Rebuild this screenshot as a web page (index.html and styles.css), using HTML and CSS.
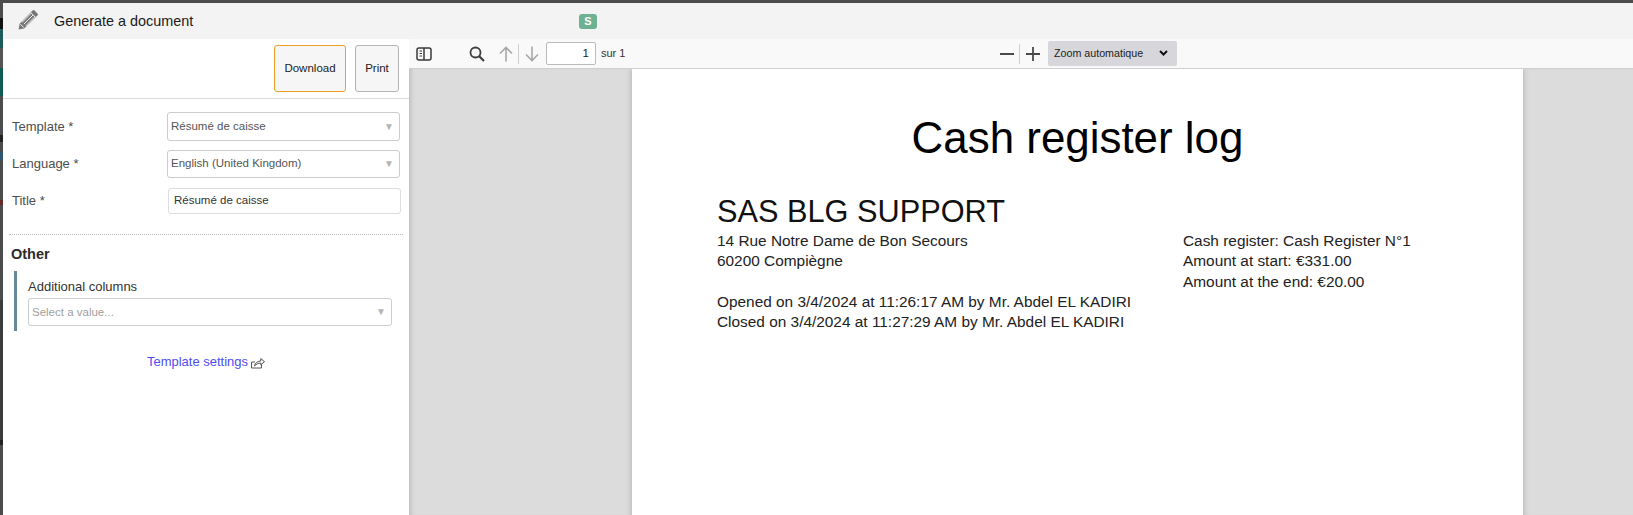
FILE: index.html
```html
<!DOCTYPE html>
<html lang="en">
<head>
<meta charset="utf-8">
<title>Generate a document</title>
<link rel="stylesheet" href="styles.css">
</head>
<body>
<div class="dialog">
  <header class="head">
    <svg class="pencil" width="20" height="20" viewBox="0 0 20 20"><path fill="#777" d="M14.600.6a1.400 1.400 0 0 1 2 0l2.800 2.800a1.400 1.400 0 0 1 0 2L6.200 18.400.6 19.400l1-5.600z"/><path fill="none" stroke="#f3f3f3" stroke-width="1" d="M13 2.800l4.200 4.200M4.200 12.200 13.400 3M7.800 15.800 17 6.600M2.400 14.200l3.400 3.400M5.900 14.100l9-9"/></svg>
    <span class="head-title">Generate a document</span>
    <span class="badge">S</span>
  </header>
  <div class="main">
    <aside class="panel">
      <div class="actions">
        <button class="btn btn-primary">Download</button>
        <button class="btn">Print</button>
      </div>
      <div class="form">
        <div class="row row-1">
          <span class="label">Template *</span>
          <div class="select"><span>Résumé de caisse</span><i class="arrow">▼</i></div>
        </div>
        <div class="row row-2">
          <span class="label">Language *</span>
          <div class="select"><span>English (United Kingdom)</span><i class="arrow">▼</i></div>
        </div>
        <div class="row row-3">
          <span class="label">Title *</span>
          <input class="text-input" value="Résumé de caisse">
        </div>
      </div>
      <div class="dotted"></div>
      <h3 class="section">Other</h3>
      <div class="group">
        <div class="group-label">Additional columns</div>
        <div class="select select-wide"><span class="placeholder">Select a value...</span><i class="arrow">▼</i></div>
      </div>
      <div class="link-row">
        <a class="link">Template settings</a>
        <svg class="link-icon" width="14" height="12" viewBox="0 0 14 12"><path fill="none" stroke="#555" stroke-width="1" d="M10.500 7.500v3.500H.5V5h3.500M3.500 9c.6-3 2.800-4.900 6.300-5V1.500L13.500 4.700 9.800 7.800V6C7.300 6 5.200 7.100 3.500 9z"/></svg>
      </div>
    </aside>
    <section class="viewer">
      <div class="toolbar">
        <svg class="tool tool-side" width="16" height="14" viewBox="0 0 16 14"><rect x="1" y="1" width="14" height="12" rx="2" fill="none" stroke="#3a3a3a" stroke-width="1.500"/><path fill="none" stroke="#3a3a3a" stroke-width="1.500" d="M8 1v12"/><path fill="none" stroke="#3a3a3a" d="M3.500 4H6M3.500 6.500H6M3.500 9H6"/></svg>
        <svg class="tool tool-search" width="16" height="16" viewBox="0 0 16 16"><circle cx="6.500" cy="6.500" r="5" fill="none" stroke="#3f3f3f" stroke-width="1.800"/><path stroke="#3f3f3f" stroke-width="2.200" d="M10.200 10.200 15 15"/></svg>
        <svg class="tool tool-up" width="14" height="16" viewBox="0 0 14 16"><path fill="none" stroke="#a8a8a8" stroke-width="1.600" d="M7 15.500V1.500M1 7.500l6-6 6 6"/></svg>
        <span class="sep sep-a"></span>
        <svg class="tool tool-down" width="14" height="16" viewBox="0 0 14 16"><path fill="none" stroke="#a8a8a8" stroke-width="1.600" d="M7 .5v14M1 8.500l6 6 6-6"/></svg>
        <input class="page-input" value="1">
        <span class="page-of">sur 1</span>
        <svg class="tool tool-minus" width="14" height="14" viewBox="0 0 14 14"><path stroke="#4a4a4a" stroke-width="2" d="M0 7h14"/></svg>
        <span class="sep sep-b"></span>
        <svg class="tool tool-plus" width="14" height="14" viewBox="0 0 14 14"><path stroke="#4a4a4a" stroke-width="1.800" d="M0 7h14M7 0v14"/></svg>
        <div class="zoom-select">
          <span>Zoom automatique</span>
          <svg width="9" height="6" viewBox="0 0 9 6"><path fill="none" stroke="#111" stroke-width="2" d="M1 1l3.500 3.500L8 1"/></svg>
        </div>
      </div>
      <div class="stage">
        <article class="page">
          <h1 class="doc-title">Cash register log</h1>
          <h2 class="doc-company">SAS BLG SUPPORT</h2>
          <div class="doc-cols">
            <div class="doc-left">
              <p>14 Rue Notre Dame de Bon Secours</p>
              <p>60200 Compiègne</p>
              <p class="gap">Opened on 3/4/2024 at 11:26:17 AM by Mr. Abdel EL KADIRI</p>
              <p>Closed on 3/4/2024 at 11:27:29 AM by Mr. Abdel EL KADIRI</p>
            </div>
            <div class="doc-right">
              <p>Cash register: Cash Register N°1</p>
              <p>Amount at start: €331.00</p>
              <p class="loose">Amount at the end: €20.00</p>
            </div>
          </div>
        </article>
      </div>
    </section>
  </div>
</div>
</body>
</html>
```
FILE: styles.css
```css
* { box-sizing: border-box; }
html, body { height: 100%; }
body {
  margin: 0;
  overflow: hidden;
  padding: 3px 0 0 3px;
  font-family: "Liberation Sans", Arial, sans-serif;
  background:
    linear-gradient(to bottom,
      #4c4c4c 0 18px, #111 18px 29px, #1f5b58 29px 48px, #555 48px 68px,
      #0f5a52 68px 96px, #4c4c4c 96px 135px, #222 135px 142px, #4c4c4c 142px 152px,
      #33566e 152px 160px, #4c4c4c 160px 200px, #6b2a2a 200px 205px, #4c4c4c 205px 300px,
      #3c3c3c 300px 440px, #222 440px 445px, #4c4c4c 445px 515px) 0 0 / 3px 100% no-repeat,
    #4c4c4c;
}
.dialog { height: 512px; display: flex; flex-direction: column; background: #fff; }

.head {
  height: 36px;
  flex: none;
  display: flex;
  align-items: center;
  background: #f3f3f3;
  padding-left: 15px;
}
.pencil { flex: none; margin-top: -3px; }
.head-title { margin-left: 16px; width: 525px; font-size: 14.400px; color: #1a1a1a; }
.badge {
  width: 18px;
  height: 15px;
  border-radius: 3px;
  background: #6fb193;
  color: #fff;
  font-size: 11px;
  font-weight: bold;
  text-align: center;
  line-height: 15px;
}

.main { flex: 1; display: flex; min-height: 0; }

.panel { width: 406px; flex: none; background: #fff; }
.actions {
  height: 60px;
  display: flex;
  justify-content: flex-end;
  gap: 9px;
  padding: 6px 10px 0 0;
  border-bottom: 1px solid #dcdcdc;
}
.btn {
  height: 47px;
  padding: 0 0 2px;
  width: 44px;
  background: #f6f6f6;
  border: 1px solid #b4b4b4;
  border-radius: 3px;
  font: 11.500px "Liberation Sans", Arial, sans-serif;
  color: #222;
}
.btn-primary { width: 72px; border-color: #ee9f27; }

.form { padding-top: 13px; }
.row { display: flex; align-items: center; padding-left: 9px; }
.row-1 { height: 29px; }
.row-2 { height: 28px; margin-top: 9px; }
.row-3 { height: 26px; margin-top: 10px; }
.label { width: 155px; flex: none; font-size: 13px; color: #4d4d4d; }
.row-2 .label, .row-3 .label { padding-bottom: 2px; }
.select {
  display: flex;
  align-items: center;
  justify-content: space-between;
  width: 233px;
  height: 100%;
  padding: 0 5px 1px 3px;
  border: 1px solid #ccc;
  border-radius: 3px;
  background: #fff;
  font-size: 11.500px;
  color: #555;
}
.row-2 .select { padding-bottom: 2px; }
.arrow { font-style: normal; font-size: 10px; color: #b5b5b5; }
.text-input {
  width: 233px;
  height: 100%;
  margin-left: 1px;
  padding: 0 5px 2px;
  border: 1px solid #ddd;
  border-radius: 3px;
  font: 11.500px "Liberation Sans", Arial, sans-serif;
  color: #333;
  outline: none;
}
.dotted { margin: 20px 6px 0 6px; border-top: 1px dotted #bdbdbd; }
.section { margin: 11px 0 0 8px; font-size: 14.500px; line-height: 16px; color: #2b2b2b; }
.group {
  margin: 9px 0 0 11px;
  width: 378px;
  height: 60px;
  padding-left: 11px;
  border-left: 3px solid #64899a;
}
.group-label { padding-top: 8px; font-size: 13px; line-height: 15px; color: #333; }
.select-wide { width: 364px; height: 28px; margin-top: 4px; padding-left: 3px; }
.placeholder { color: #a0a0a0; }
.link-row {
  margin-top: 22px;
  display: flex;
  align-items: center;
  justify-content: center;
  gap: 3px;
  height: 16px;
}
.link { font-size: 13px; color: #4e4ef0; }
.link-icon { margin-top: 3px; }

.viewer { flex: 1; min-width: 0; display: flex; flex-direction: column; }
.toolbar {
  height: 30px;
  flex: none;
  display: flex;
  align-items: center;
  background: #f9f9f9;
  border-bottom: 1px solid #cfcfcf;
  padding-left: 7px;
  font-size: 11px;
  color: #333;
}
.tool { flex: none; }
.tool-search { margin-left: 37px; }
.tool-up { margin-left: 14px; }
.sep { width: 1px; height: 20px; background: #cfcfcf; flex: none; }
.sep-a { margin-left: 5px; }
.tool-down { margin-left: 6px; }
.page-input {
  width: 50px;
  height: 23px;
  margin-left: 7px;
  padding: 0 6px 2px;
  border: 1px solid #bbb;
  border-radius: 2px;
  text-align: right;
  font: 11.500px "Liberation Sans", Arial, sans-serif;
  color: #222;
  outline: none;
}
.page-of { margin-left: 5px; width: 399px; flex: none; padding-bottom: 2px; }
.tool-minus { margin-left: 0; }
.sep-b { margin-left: 5px; }
.tool-plus { margin-left: 6px; }
.zoom-select {
  width: 129px;
  height: 25px;
  margin-left: 8px;
  padding: 0 9px 2px 6px;
  display: flex;
  align-items: center;
  justify-content: space-between;
  background: #d7d7db;
  border-radius: 2px;
  font-size: 10.700px;
  color: #222;
}

.stage {
  flex: 1;
  min-height: 0;
  overflow: hidden;
  padding-left: 223px;
  background: #dcdcdc;
  box-shadow: inset 5px 0 4px -3px #bdbdbd;
}
.page {
  width: 891px;
  height: 460px;
  padding: 41px 85px 0 85px;
  background: #fff;
  box-shadow: 0 0 6px #aaa;
  color: #222;
}
.doc-title { margin: 0; font-size: 43.900px; font-weight: normal; line-height: 56px; text-align: center; color: #000; }
.doc-company { margin: 27px 0 0; font-size: 30.720px; font-weight: normal; line-height: 37px; color: #111; }
.doc-cols { display: flex; margin-top: 1px; }
.doc-left { width: 466px; flex: none; }
.doc-cols p { margin: 0; font-size: 15.400px; line-height: 20px; white-space: nowrap; }
.doc-cols .gap { margin-top: 21px; }
.doc-cols .loose { margin-top: 1px; }
```
